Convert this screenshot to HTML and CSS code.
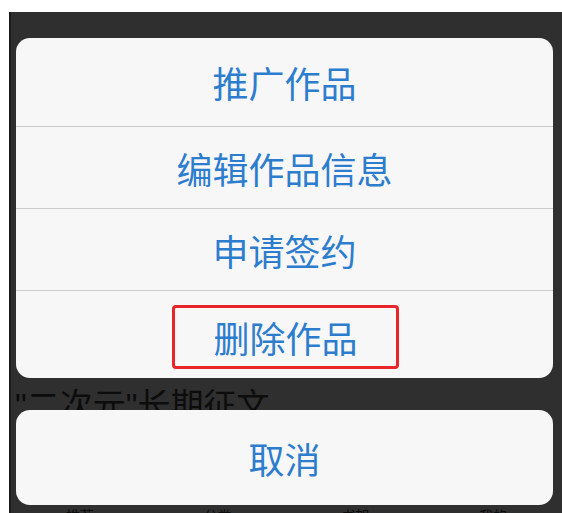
FILE: index.html
```html
<!DOCTYPE html>
<html lang="zh-CN">

<head>
    <meta charset="UTF-8">
    <meta name="viewport" content="width=device-width, initial-scale=1.0">
    <title>作品操作</title>
    <link rel="stylesheet" href="styles.css">
</head>

<body>
    <div class="screen">
        <!-- 遮罩下面的页面 -->
        <div class="page-behind">
            <div class="behind-title">"二次元"长期征文</div>
            <div class="behind-tabs">
                <span>推荐</span>
                <span>分类</span>
                <span>书架</span>
                <span>我的</span>
            </div>
        </div>

        <!-- 操作菜单 -->
        <div class="sheet">
            <div class="group">
                <div class="item">推广作品</div>
                <div class="item">编辑作品信息</div>
                <div class="item">申请签约</div>
                <div class="item"><span class="mark">删除作品</span></div>
            </div>
            <div class="group cancel">
                <div class="item">取消</div>
            </div>
        </div>
    </div>
</body>

</html>
```

FILE: styles.css
```css
/* 页面 */
body {
    margin: 0;
    padding: 0;
    background: #ffffff;
    font-family: "Noto Sans CJK SC", "Noto Sans", sans-serif;
}

/* 深色遮罩区域 */
.screen {
    position: relative;
    margin: 12px 0 0 9px;
    height: 501px;
    background: #2f2f2f;
    border-left: 2px solid #1b1b1b;
    overflow: hidden;
}

.page-behind {
    position: absolute;
    top: 0;
    left: 0;
    right: 0;
    bottom: 0;
    color: #0c0c0c;
}

.behind-title {
    position: absolute;
    top: 377px;
    left: 4px;
    font-family: "Liberation Sans", "Noto Sans CJK SC", sans-serif;
    font-size: 33px;
    line-height: 33px;
}

.behind-tabs {
    position: absolute;
    left: 0;
    right: 0;
    bottom: -12px;
    display: flex;
    justify-content: space-around;
    font-size: 14px;
    line-height: 20px;
}

/* 菜单 */
.sheet {
    position: relative;
    padding: 26px 9px 0 5px;
    display: flex;
    flex-direction: column;
    gap: 32px;
}

.group {
    background: #f7f7f7;
    border-radius: 14px;
    overflow: hidden;
}

.item {
    height: 82px;
    display: flex;
    align-items: center;
    justify-content: center;
    font-size: 36px;
    color: #2d7dcf;
    border-top: 1px solid #cbcbcb;
    box-sizing: border-box;
}

.item:first-child {
    height: 88px;
    border-top: none;
}

.item:last-child {
    height: 88px;
}

.cancel .item {
    height: 95px;
}

/* 红框标注 */
.mark {
    display: flex;
    align-items: center;
    justify-content: center;
    width: 227px;
    height: 64px;
    box-sizing: border-box;
    border: 3px solid #e8252b;
    border-radius: 4px;
    margin: 4px 0 0 2px;
}
```
